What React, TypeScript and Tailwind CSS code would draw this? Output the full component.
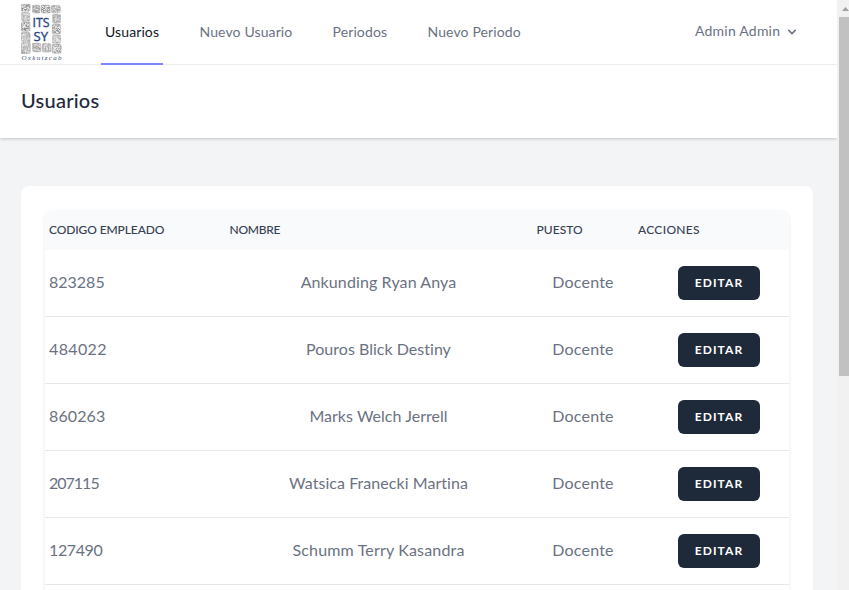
import React from "react";

const links = [
  { label: "Nuevo Usuario", box: "ml-[36.5px] w-[93.5px]", track: "tracking-[0.12px]" },
  { label: "Periodos", box: "ml-[39.5px] w-[55px]", track: "tracking-[0.12px]" },
  { label: "Nuevo Periodo", box: "ml-[40px] w-[93px]", track: "tracking-[0.12px]" },
];

const users = [
  { code: "823285", name: "Ankunding Ryan Anya", track: "tracking-[0.1px]", codeTrack: "" },
  { code: "484022", name: "Pouros Blick Destiny", track: "tracking-[0.02px]", codeTrack: "tracking-[0.35px]" },
  { code: "860263", name: "Marks Welch Jerrell", track: "tracking-[0.03px]", codeTrack: "tracking-[0.1px]" },
  { code: "207115", name: "Watsica Franecki Martina", track: "tracking-[0.05px]", codeTrack: "tracking-[-1px]" },
  { code: "127490", name: "Schumm Terry Kasandra", track: "tracking-[0.17px]", codeTrack: "tracking-[-0.4px]" },
];

// Carved stone blocks that frame the logo: x, y, width, height
const stones = [
  [0, 0, 9.2, 7.4], [0.5, 8.3, 8.5, 9], [0, 18, 9, 9.6], [0, 28.5, 9, 9], [0, 38.5, 9.5, 11],
  [11.5, 1, 7.6, 8.2], [20, 1, 9, 8.2], [30, 1.4, 9.5, 7.8],
  [31.5, 10.2, 8, 9], [31, 20, 8.8, 10.5], [31.5, 31.3, 8, 8],
  [11.5, 39, 8.6, 9], [21, 39.5, 9, 8.8], [31, 40.2, 9, 9.2],
];

// Grey levels of the relief inside each block, picked per unit cell
const greys = ["#ececec", "#929292", "#c6c6c6", "#d6d6d6", "#a9a9a9", "#e0e0e0", "#8b8b8b", "#bcbcbc"];

function Stone({ b, i }: { b: number[]; i: number }) {
  const [x, y, w, h] = b;
  const cols = Math.floor(w);
  const rows = Math.floor(h);
  const cells = Array.from({ length: cols * rows }, (_, n) => {
    const cx = n % cols;
    const cy = Math.floor(n / cols);
    const s = Math.sin(cx * 12.9898 + cy * 78.233 + i * 37.719) * 43758.5453;
    const g = Math.floor((s - Math.floor(s)) * 8);
    return <rect key={n} x={cx} y={cy} width="1.3" height="1.05" fill={greys[g]} />;
  });
  return (
    <g transform={`translate(${x} ${y})`}>
      {cells}
      <rect x="0.3" y="0.3" width={w - 0.6} height={h - 0.6} rx="1.6" fill="none" stroke="#b4b4b4" strokeWidth="0.7" />
    </g>
  );
}

function Logo() {
  return (
    <svg width="42" height="60" viewBox="0 0 42 60" className="mt-[3px] ml-[21px] shrink-0">
      <g transform="translate(0 1)">
        {stones.map((b, i) => <Stone key={i} b={b} i={i} />)}
      </g>
      <g fill="#27447f" stroke="#27447f" strokeWidth="0.35" fontFamily="'Open Sans', sans-serif" fontSize="13.5">
        <text x="11.5" y="24.3" textLength="17" lengthAdjust="spacingAndGlyphs">ITS</text>
        <text x="12.5" y="37.6" textLength="14.5" lengthAdjust="spacingAndGlyphs">SY</text>
      </g>
      <text x="0.5" y="57" fill="#46577b" fontFamily="'Liberation Serif', serif" fontStyle="italic" fontSize="7" textLength="40">Oxkutzcab</text>
    </svg>
  );
}

function Navigation() {
  return (
    <nav className="flex h-[65px] border-b border-gray-100 bg-white text-sm whitespace-nowrap text-gray-500">
      <Logo />
      <a className="ml-[38px] flex h-[65px] w-[62px] items-center border-b-2 border-indigo-400 pl-1 tracking-[0.1px] text-gray-900">Usuarios</a>
      {links.map((l) => (
        <a key={l.label} className={`flex h-[65px] items-center pb-0.5 ${l.box} ${l.track}`}>{l.label}</a>
      ))}
      <button className="mr-[37px] ml-auto flex h-[63px] items-center">
        <span className="w-[89px] pb-px text-left tracking-[0.22px]">Admin Admin</span>
        <svg className="h-4 w-4" viewBox="0 0 20 20" fill="currentColor">
          <path fillRule="evenodd" d="M5.293 7.293a1 1 0 011.414 0L10 10.586l3.293-3.293a1 1 0 111.414 1.414l-4 4a1 1 0 01-1.414 0l-4-4a1 1 0 010-1.414z" clipRule="evenodd" />
        </svg>
      </button>
    </nav>
  );
}

function UsersTable() {
  return (
    <div className="h-[500px] overflow-hidden rounded-t-lg shadow-[0_2px_4px_rgba(0,0,0,0.09)]">
      <div className="grid h-10 grid-cols-[184.5px_307px_101.5px_151px] items-center bg-gray-50 text-xs font-medium text-gray-700">
        <span className="pl-1 tracking-[-0.1px]">CODIGO EMPLEADO</span>
        <span className="tracking-[-0.25px]">NOMBRE</span>
        <span className="tracking-[0.05px]">PUESTO</span>
        <span className="tracking-[0.3px]">ACCIONES</span>
      </div>
      {users.map((u) => (
        <div key={u.code} className="grid h-[67px] grid-cols-[184px_299px_110px_151px] items-center border-b border-gray-200 bg-white text-base text-gray-500">
          <span className={`pb-0.5 pl-1 ${u.codeTrack}`}>{u.code}</span>
          <span className={`pb-0.5 text-center ${u.track}`}>{u.name}</span>
          <span className="pb-0.5 text-center tracking-[0.2px]">Docente</span>
          <button className="ml-10 flex h-[34px] w-[82px] items-center justify-center rounded-md bg-gray-800 text-xs font-bold tracking-[1.1px] text-white">EDITAR</button>
        </div>
      ))}
    </div>
  );
}

export default function App() {
  return (
    <div className="flex h-[590px] w-[849px] overflow-hidden bg-[#f3f4f6] font-['Lato',sans-serif]">
      <div className="h-full w-[837px] overflow-hidden">
        <Navigation />
        <header className="flex h-[73px] items-center bg-white pb-[3px] pl-[21px] shadow-[0_1px_3px_rgba(0,0,0,0.2)]">
          <h2 className="text-xl font-medium tracking-[0.25px] text-gray-800">Usuarios</h2>
        </header>
        <main className="mt-12 mr-6 ml-[21px] h-[600px] rounded-lg bg-white pt-6 pr-6 pl-6 shadow-[0_1px_2px_rgba(0,0,0,0.03)]">
          <UsersTable />
        </main>
      </div>
      <aside className="h-full w-3 bg-[#f1f1f1]">
        <svg className="mt-[7px] ml-[5px] h-1 w-[7px]" viewBox="0 0 7 4"><path d="M0 4 3.5 0 7 4Z" fill="#a0a0a0" /></svg>
        <div className="mt-[6px] ml-[2px] h-[359px] bg-[#c1c1c1]" />
      </aside>
    </div>
  );
}
